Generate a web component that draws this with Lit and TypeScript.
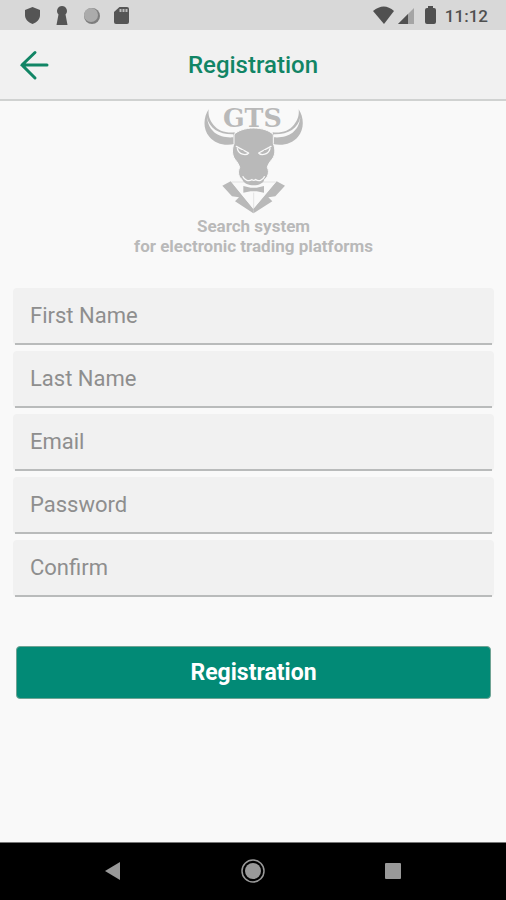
import { LitElement, html, css, svg } from "lit";
import { customElement } from "lit/decorators.js";

const statusIcons = svg`
  <path fill="#555" d="M25 10 L32.500 7 L40 10 V15 C40 19 37 22.500 32.500 24 C28 22.500 25 19 25 15Z"/>
  <path fill="#555" d="M62 6 a5 5 0 0 1 3.500 8.500 L66 17 L67.500 25 H56.500 L58 17 L58.500 14.500 A5 5 0 0 1 62 6Z"/>
  <circle cx="92" cy="16" r="8" fill="#7d7d7d"/>
  <circle cx="91" cy="15" r="7" fill="#ababab"/>
  <path fill="#555" d="M119.500 7 H127 Q129 7 129 9 V22 Q129 24 127 24 H116 Q114 24 114 22 V12Z"/>
  <path stroke="#bbb" stroke-width="2" d="M120.500 9 V12 M123.500 9 V12 M126.500 9 V12"/>`;

@customElement("app-root")
export class AppRoot extends LitElement {
  static styles = css`
    :host {
      display: flex;
      flex-direction: column;
      min-height: 100vh;
      background: #f9f9f9;
      font-family: Roboto, "Liberation Sans", sans-serif;
    }
    * { box-sizing: border-box; }
    svg { display: block; overflow: visible; }
    button { border: 0; padding: 0; background: none; font-family: inherit; cursor: pointer; }
    .status {
      display: flex;
      justify-content: space-between;
      height: 30px;
      background: #d8d8d8;
      color: #505050;
    }
    .system { display: flex; gap: 8px; padding-right: 18px; }
    .time { font-size: 17px; font-weight: 500; line-height: 32px; }
    .bar {
      display: grid;
      grid-template-columns: 68px 1fr 68px;
      align-items: center;
      height: 71px;
      background: #f1f1f1;
      border-bottom: 2px solid #d0d2d1;
      color: #118565;
    }
    .back { display: flex; justify-content: center; color: inherit; }
    h1 { margin: 0; font-size: 24px; font-weight: 500; line-height: 34px; text-align: center; }
    main { flex: 1; display: flex; flex-direction: column; padding: 5px 12px 0 13px; }
    .brand { display: flex; flex-direction: column; align-items: center; color: #b9b9b9; }
    .brand p { margin: 2px 0 0; font-size: 17px; font-weight: 700; line-height: 20px; text-align: center; }
    .wordmark { font-family: "DejaVu Serif", serif; font-size: 76px; font-weight: 700; }
    form { display: flex; flex-direction: column; margin-top: 32px; }
    .fields { display: flex; flex-direction: column; gap: 6px; }
    .field { display: block; height: 57px; padding: 0 2px; background: #f1f1f1; border-radius: 4px; }
    input {
      display: block;
      width: 100%;
      height: 57px;
      border: 0;
      border-bottom: 2px solid #b9bbbb;
      padding: 0 15px;
      background: none;
      outline: none;
      color: #444;
      font-family: inherit;
      font-size: 22px;
    }
    input::placeholder { color: #8e8e8e; opacity: 1; }
    .submit {
      height: 53px;
      margin: 49px 3px 0;
      border: 1px solid #6fa394;
      border-radius: 4px;
      background: #028a76;
      color: #fff;
      font-size: 23px;
      font-weight: 700;
    }
    .nav {
      display: flex;
      justify-content: center;
      gap: 112px;
      height: 58px;
      padding-bottom: 2px;
      background: #000;
      border-top: 1px solid #777;
    }
    .nav button { display: flex; align-items: center; justify-content: center; width: 28px; }
  `;

  private fields = [
    { label: "First Name", type: "text" },
    { label: "Last Name", type: "text" },
    { label: "Email", type: "email" },
    { label: "Password", type: "password" },
    { label: "Confirm", type: "password" },
  ];

  render() {
    return html`
      <div class="status">
        <svg width="140" height="30" viewBox="0 0 140 30">${statusIcons}</svg>
        <div class="system">
          <svg width="64" height="30" viewBox="371 0 64 30">
            <path fill="#505050" d="M371 11 Q382 2 392 11 L382 24Z" />
            <path fill="#a5a5a5" d="M396 24 L412 8 V24Z" />
            <path fill="#505050" d="M396 24 L406 14 V24Z" />
            <path fill="#505050" d="M426 6 H431 V8 H432 Q434 8 434 10 V22 Q434 24 432 24 H425 Q423 24 423 22 V10 Q423 8 425 8 H426Z" />
          </svg>
          <span class="time">11:12</span>
        </div>
      </div>
      <header class="bar">
        <button class="back" aria-label="Back">
          <svg width="30" height="30" viewBox="0 0 30 30" fill="none" stroke="currentColor" stroke-width="3" stroke-linecap="round">
            <path d="M16 2.500 L3 15 L16 28 M3 15 H28" />
          </svg>
        </button>
        <h1>Registration</h1>
      </header>
      <main>
        <div class="brand">
          <svg width="100" height="108" viewBox="42 24 300 324" fill="currentColor" role="img" aria-label="GTS">
            <path d="M56 34 C40 58 38 94 58 116 C76 138 104 144 134 138 L134 103 C108 106 84 98 70 80 C58 66 54 50 56 34Z" />
            <path d="M326 34 C342 58 344 94 324 116 C306 138 278 144 248 138 L248 103 C274 106 298 98 312 80 C324 66 328 50 326 34Z" />
            <path d="M51 58 C58 92 88 110 130 109 V118 C90 121 56 104 51 58Z M331 58 C324 92 294 110 252 109 V118 C292 121 326 104 331 58Z" fill="#f9f9f9" />
            <text class="wordmark" x="187" y="86" text-anchor="middle">GTS</text>
            <path d="M132 110 C142 98 166 90 191 90 C216 90 240 98 250 110 V137 C257 154 256 172 246 184 C239 192 234 200 232 208 C240 224 232 240 222 246 C220 256 206 262 191 262 C176 262 162 256 158 246 C146 238 142 224 149 208 C146 199 142 192 135 184 C126 172 125 154 132 137Z" stroke="#f9f9f9" stroke-width="3" />
            <g fill="none" stroke="#f9f9f9" stroke-width="4" stroke-linecap="round" stroke-linejoin="round">
              <path d="M139 145 L176 165 C168 174 146 170 142 152" />
              <path d="M243 145 L206 165 C214 174 236 170 240 152" />
            </g>
            <circle cx="157" cy="160" r="4" />
            <circle cx="225" cy="160" r="4" />
            <path d="M97 263 L122 250 L190 333 V346 L135 310 L147 298 L126 295Z" />
            <path d="M285 263 L260 250 L190 333 V346 L247 310 L235 298 L256 295Z" />
            <path d="M125 252 H257 L190 332Z" fill="#f9f9f9" />
            <path d="M125 252 H257" fill="none" stroke="currentColor" stroke-width="1" />
            <path d="M154 226 H228 L222 246 C220 256 206 262 191 262 C176 262 162 256 158 246Z" />
            <path d="M158 235 C164 248 176 251 186 245 Q191 249 197 245 C206 251 218 248 224 235" fill="none" stroke="#f9f9f9" stroke-width="4" />
            <path d="M160 264 L182 269 H200 L222 264 V284 L200 280 H182 L160 284Z" />
            <path d="M191 284 V336" stroke="currentColor" stroke-width="1" />
          </svg>
          <p>Search system<br />for electronic trading platforms</p>
        </div>
        <form @submit=${(e: Event) => e.preventDefault()}>
          <div class="fields">
            ${this.fields.map(
              (f) => html`<label class="field"><input type=${f.type} placeholder=${f.label} aria-label=${f.label} /></label>`
            )}
          </div>
          <button class="submit" type="submit">Registration</button>
        </form>
      </main>
      <nav class="nav">
        <button aria-label="Back">
          <svg width="28" height="28" viewBox="0 0 28 28"><path d="M6 14 L21 5 V23Z" fill="#999" /></svg>
        </button>
        <button aria-label="Home">
          <svg width="28" height="28" viewBox="0 0 28 28">
            <circle cx="14" cy="14" r="8" fill="#999" />
            <circle cx="14" cy="14" r="11" fill="none" stroke="#999" stroke-width="1.500" />
          </svg>
        </button>
        <button aria-label="Recent apps">
          <svg width="28" height="28" viewBox="0 0 28 28"><rect x="6" y="6" width="16" height="16" rx="1" fill="#999" /></svg>
        </button>
      </nav>
    `;
  }
}
